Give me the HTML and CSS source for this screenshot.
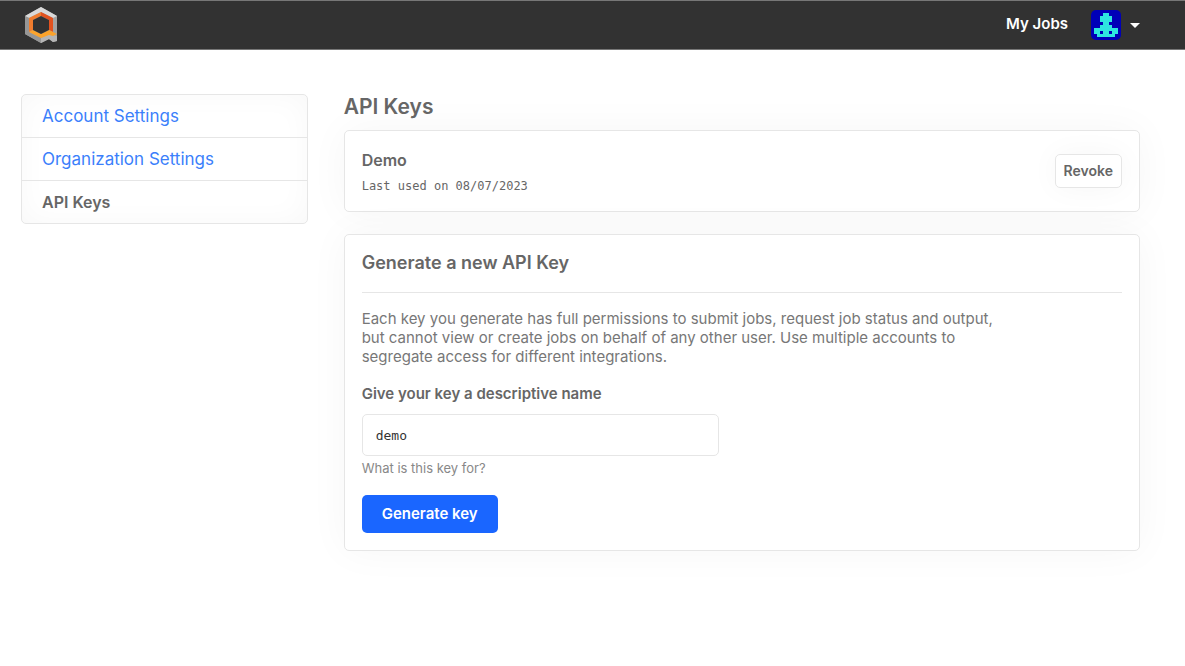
FILE: index.html
```html
<!DOCTYPE html>
<html lang="en">
<head>
    <meta charset="UTF-8">
    <meta name="viewport" content="width=device-width, initial-scale=1.0">
    <title>API Keys</title>
    <link rel="stylesheet" href="styles.css">
</head>
<body>
    <header class="navbar">
        <a class="brand" href="#" aria-label="Home">
            <svg width="34" height="36" viewBox="0 0 34 36">
                <polygon points="17,0 33,9 33,34 29,35 25,32 17,36 1,27 1,9" fill="#a3a3a3"/>
                <polygon points="17,0 33,9 29,11 17,5 5,11 1,9" fill="#d9d9d9"/>
                <polygon points="1,9 5,11 5,25 17,31 17,36 1,27" fill="#969696"/>
                <polygon points="17,31 25,27 33,29 33,34 29,35 25,32 17,36" fill="#b5b5b5"/>
                <polygon points="17,5 17,9 9,13 9,23 5,25 5,11" fill="#f07c2e"/>
                <polygon points="17,5 29,11 29,25 25,23 25,13 17,9" fill="#e2521f"/>
                <polygon points="5,25 9,23 17,27 25,23 33,27 29,29 25,28 17,31" fill="#fba32b"/>
                <polygon points="17,9 25,13 25,23 17,27 9,23 9,13" fill="#323232"/>
            </svg>
        </a>
        <nav class="nav-right">
            <a class="nav-link" href="#">My Jobs</a>
            <button class="user-menu" type="button" aria-label="User menu">
                <svg class="avatar" width="30" height="30" viewBox="0 0 30 30" shape-rendering="crispEdges">
                    <rect width="30" height="30" fill="#0000b8"/>
                    <path fill="#2ee6e0" d="M12 3h6v3h3v6h-3v3h3v3h6v6h-3v3H6v-3H3v-6h6v-3h3v-3H9V6h3z"/>
                    <path fill="#0000b8" d="M9 21h3v3H9zM18 21h3v3h-3z"/>
                </svg>
                <span class="caret"></span>
            </button>
        </nav>
    </header>

    <div class="container">
        <nav class="sidebar">
            <a class="sidebar-item" href="#">Account Settings</a>
            <a class="sidebar-item" href="#">Organization Settings</a>
            <a class="sidebar-item active" href="#">API Keys</a>
        </nav>

        <main class="content">
            <h1>API Keys</h1>

            <section class="card key">
                <div>
                    <h3>Demo</h3>
                    <p class="last-used">Last used on 08/07/2023</p>
                </div>
                <button class="revoke" type="button">Revoke</button>
            </section>

            <section class="card">
                <h2>Generate a new API Key</h2>
                <p class="description">Each key you generate has full permissions to submit jobs, request job status and output, but cannot view or create jobs on behalf of any other user. Use multiple accounts to segregate access for different integrations.</p>
                <form>
                    <label for="key-name">Give your key a descriptive name</label>
                    <input type="text" id="key-name" value="demo" aria-describedby="key-help">
                    <small id="key-help">What is this key for?</small>
                    <button class="generate" type="submit">Generate key</button>
                </form>
            </section>
        </main>
    </div>
</body>
</html>
```

FILE: styles.css
```css
* {
    box-sizing: border-box;
}
body {
    margin: 0;
    font-family: Inter, "Liberation Sans", sans-serif;
    font-size: 15px;
    color: #666;
    background-color: #fff;
}
h1, h2, h3, p {
    margin: 0;
}
h1, h2, h3 {
    font-weight: 600;
}
a {
    text-decoration: none;
}
button {
    font-family: inherit;
    cursor: pointer;
}
.navbar {
    display: flex;
    justify-content: space-between;
    align-items: center;
    height: 50px;
    padding: 0 45px 0 24px;
    background-color: #323232;
    border-top: 1px solid #777;
    border-bottom: 1px solid #777;
}
.brand svg, .avatar {
    display: block;
}
.nav-right {
    display: flex;
    align-items: center;
    gap: 23px;
}
.nav-link {
    padding-bottom: 4px;
    font-weight: 600;
    color: #fff;
}
.user-menu {
    display: flex;
    align-items: center;
    gap: 9px;
    padding: 0;
    border: none;
    background: none;
}
.avatar {
    border-radius: 5px;
}
.caret {
    border: 5px solid transparent;
    border-top-color: #fff;
    border-bottom: none;
}
.container {
    display: grid;
    grid-template-columns: 9fr 25fr;
    align-items: start;
    gap: 36px;
    padding: 44px 45px 45px 21px;
}
.sidebar {
    border: 1px solid #e6e6e6;
    border-radius: 5px;
    box-shadow: inset 0 0 30px rgba(0, 0, 0, 0.03);
}
.sidebar-item {
    display: block;
    padding: 0 20px;
    font-size: 17px;
    line-height: 42px;
    color: #3b7ffb;
}
.sidebar-item + .sidebar-item {
    border-top: 1px solid #e6e6e6;
}
.sidebar-item.active {
    font-size: 16px;
    font-weight: 600;
    color: #666;
}
h1 {
    margin-bottom: 10px;
    font-size: 21px;
    line-height: 26px;
}
.card {
    padding: 17px;
    background-color: #fff;
    border: 1px solid #e6e6e6;
    border-radius: 5px;
    box-shadow: 0 0 40px rgba(0, 0, 0, 0.04);
}
.key {
    display: flex;
    justify-content: space-between;
    align-items: center;
    margin-bottom: 22px;
}
h3 {
    margin-bottom: 7px;
    font-size: 16px;
    line-height: 24px;
}
.last-used {
    font-family: "DejaVu Sans Mono", monospace;
    font-size: 12px;
    line-height: 15px;
}
.revoke {
    padding: 0 8px;
    font-size: 14px;
    font-weight: 600;
    line-height: 32px;
    color: #666;
    background-color: #fff;
    border: 1px solid #e6e6e6;
    border-radius: 5px;
    box-shadow: 0 0 30px rgba(0, 0, 0, 0.04);
}
h2 {
    padding-bottom: 18px;
    border-bottom: 1px solid #e6e6e6;
    font-size: 18px;
    line-height: 22px;
}
.description {
    max-width: 650px;
    margin: 16px 0 18px;
    line-height: 19px;
    color: #777;
}
label {
    display: block;
    margin-bottom: 11px;
    font-weight: 600;
    line-height: 19px;
}
input {
    display: block;
    width: 47%;
    height: 42px;
    padding: 0 13px;
    font-family: "DejaVu Sans Mono", monospace;
    font-size: 13px;
    color: #333;
    background-color: #fff;
    border: 1px solid #e6e6e6;
    border-radius: 5px;
}
small {
    display: block;
    margin: 4px 0 18px;
    font-size: 13px;
    line-height: 17px;
    color: #888;
}
.generate {
    padding: 0 20px;
    font-size: 15px;
    font-weight: 600;
    line-height: 38px;
    color: #fff;
    background-color: #1a66ff;
    border: none;
    border-radius: 5px;
}
```
